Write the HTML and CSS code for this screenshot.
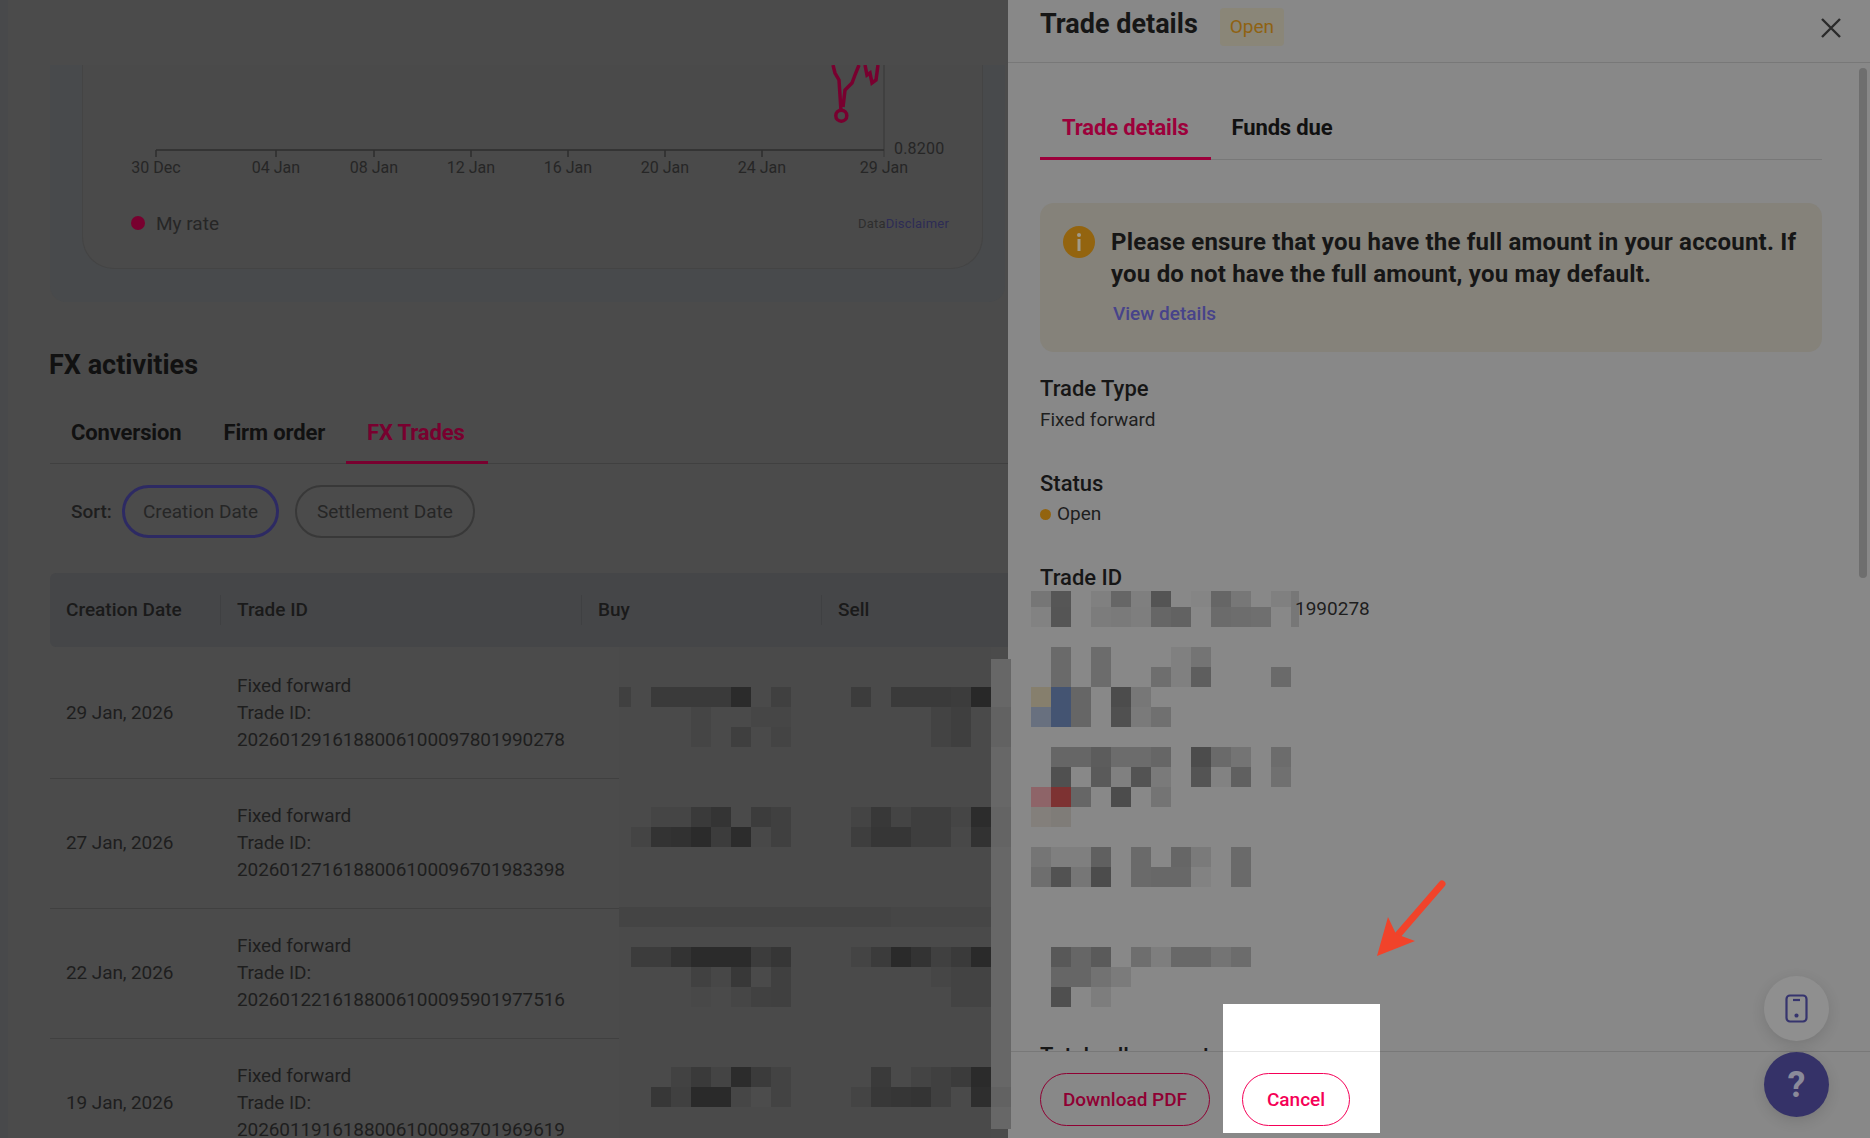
FILE: index.html
```html
<!DOCTYPE html>
<html lang="en">
<head>
    <meta charset="UTF-8">
    <meta name="viewport" content="width=device-width, initial-scale=1.0">
    <title>FX Trades - Trade details</title>
    <link rel="stylesheet" href="styles.css">
</head>
<body>
<div class="app">

    <!-- Page behind the drawer -->
    <main class="page">
        <div class="page-top"></div>

        <div class="chart-panel">
            <div class="chart-card">
                <svg class="chart" width="900" height="130" viewBox="82 65 900 130">
                    <path class="axis-y" d="M884 65V157"/>
                    <path class="axis-x" d="M156 150H884M156 150v7M276 150v7M374 150v7M471 150v7M568 150v7M665 150v7M762 150v7"/>
                    <path class="rate" d="M833 65L835 73L839 80L841 111M843 107L845 90L848 87L852 83L855 75L859 65M865 65L867 75L870 73L872 83L876 80L878 65"/>
                    <circle class="rate" cx="841.3" cy="115.7" r="5.5"/>
                    <text class="axis-value" x="894" y="154">0.8200</text>
                    <g text-anchor="middle">
                        <text x="156" y="173">30 Dec</text>
                        <text x="276" y="173">04 Jan</text>
                        <text x="374" y="173">08 Jan</text>
                        <text x="471" y="173">12 Jan</text>
                        <text x="568" y="173">16 Jan</text>
                        <text x="665" y="173">20 Jan</text>
                        <text x="762" y="173">24 Jan</text>
                        <text x="884" y="173">29 Jan</text>
                    </g>
                </svg>
                <div class="chart-foot">
                    <span class="legend"><i class="legend-dot"></i>My rate</span>
                    <span class="disclaimer">Data<b>Disclaimer</b></span>
                </div>
            </div>
        </div>

        <section class="activities">
            <h2>FX activities</h2>
            <div class="tabs">
                <a class="tab">Conversion</a>
                <a class="tab">Firm order</a>
                <a class="tab active">FX Trades</a>
            </div>

            <div class="sort">
                <span class="sort-label">Sort:</span>
                <button class="pill selected">Creation Date</button>
                <button class="pill">Settlement Date</button>
            </div>

            <div class="table-head">
                <div class="th th-date">Creation Date</div>
                <div class="th th-id">Trade ID</div>
                <div class="th th-buy">Buy</div>
                <div class="th">Sell</div>
            </div>
            <div class="row">
                <div>29 Jan, 2026</div>
                <div>Fixed forward<br>Trade ID:<br>2026012916188006100097801990278</div>
            </div>
            <div class="row">
                <div>27 Jan, 2026</div>
                <div>Fixed forward<br>Trade ID:<br>2026012716188006100096701983398</div>
            </div>
            <div class="row">
                <div>22 Jan, 2026</div>
                <div>Fixed forward<br>Trade ID:<br>2026012216188006100095901977516</div>
            </div>
            <div class="row">
                <div>19 Jan, 2026</div>
                <div>Fixed forward<br>Trade ID:<br>2026011916188006100098701969619</div>
            </div>
        </section>
    </main>

    <!-- Trade details drawer -->
    <aside class="drawer">
        <header class="drawer-head">
            <h1>Trade details</h1>
            <span class="badge">Open</span>
            <svg class="close" width="20" height="20" viewBox="0 0 20 20"><path d="M1 1L19 19M19 1L1 19"/></svg>
        </header>

        <div class="drawer-body">
            <div class="tabs tabs-drawer">
                <a class="tab active">Trade details</a>
                <a class="tab">Funds due</a>
            </div>

            <div class="notice">
                <svg class="notice-icon" width="32" height="32" viewBox="0 0 32 32">
                    <circle cx="16" cy="16" r="16" fill="#93640f"/>
                    <circle cx="16" cy="9" r="2" fill="#a09a8a"/>
                    <rect x="14.5" y="13" width="3" height="12" fill="#a09a8a"/>
                </svg>
                <div>
                    <p class="notice-text">Please ensure that you have the full amount in your account. If you do not have the full amount, you may default.</p>
                    <a class="notice-link">View details</a>
                </div>
            </div>

            <div class="field">
                <div class="field-label">Trade Type</div>
                <div class="field-value">Fixed forward</div>
            </div>
            <div class="field">
                <div class="field-label">Status</div>
                <div class="field-value status"><i class="status-dot"></i>Open</div>
            </div>
            <div class="field">
                <div class="field-label">Trade ID</div>
                <div class="field-value id-value">
                    <svg class="mosaic" width="268" height="36" viewBox="0 0 13.4 1.8">
                        <g shape-rendering="crispEdges">
                            <rect x="0" y="0" width="1" height=".8" fill="#767676"/><rect x="1" y="0" width="1" height=".8" fill="#565656"/><rect x="3" y="0" width="1" height=".8" fill="#808080"/><rect x="4" y="0" width="1" height=".8" fill="#666"/><rect x="5" y="0" width="1" height=".8" fill="#7f7f7f"/><rect x="6" y="0" width="1" height=".8" fill="#545454"/><rect x="8" y="0" width="1" height=".8" fill="#858585"/><rect x="9" y="0" width="1" height=".8" fill="#666"/><rect x="10" y="0" width="1" height=".8" fill="#777"/><rect x="12" y="0" width="1" height=".8" fill="#808080"/><rect x="13" y="0" width=".4" height=".8" fill="#777"/>
                            <rect x="0" y=".8" width="1" height="1" fill="#828282"/><rect x="1" y=".8" width="1" height="1" fill="#555"/><rect x="3" y=".8" width="1" height="1" fill="#7c7c7c"/><rect x="4" y=".8" width="1" height="1" fill="#7a7a7a"/><rect x="5" y=".8" width="1" height="1" fill="#7e7e7e"/><rect x="6" y=".8" width="1" height="1" fill="#666"/><rect x="7" y=".8" width="1" height="1" fill="#626262"/><rect x="9" y=".8" width="1" height="1" fill="#6b6b6b"/><rect x="10" y=".8" width="1" height="1" fill="#6d6d6d"/><rect x="11" y=".8" width="1" height="1" fill="#6f6f6f"/><rect x="13" y=".8" width=".4" height="1" fill="#777"/>
                        </g>
                    </svg>1990278
                </div>
            </div>

            <svg class="mosaic mosaic-tall" width="280" height="360" viewBox="0 0 14 18">
                <g shape-rendering="crispEdges">
                    <rect x="1" y="0" width="1" height="2" fill="#6a6a6a"/><rect x="3" y="0" width="1" height="2" fill="#6c6c6c"/><rect x="7" y="0" width="1" height="2" fill="#808080"/><rect x="8" y="0" width="1" height="1" fill="#747474"/><rect x="6" y="1" width="1" height="1" fill="#6e6e6e"/><rect x="8" y="1" width="1" height="1" fill="#5e5e5e"/><rect x="12" y="1" width="1" height="1" fill="#6a6a6a"/>
                    <rect x="0" y="2" width="1" height="1" fill="#867f6d"/><rect x="1" y="2" width="1" height="2" fill="#445472"/><rect x="2" y="2" width="1" height="2" fill="#666"/><rect x="4" y="2" width="1" height="1" fill="#4c4c4c"/><rect x="5" y="2" width="1" height="1" fill="#777"/>
                    <rect x="0" y="3" width="1" height="1" fill="#68707f"/><rect x="4" y="3" width="1" height="1" fill="#505050"/><rect x="5" y="3" width="1" height="1" fill="#7a7a7a"/><rect x="6" y="3" width="1" height="1" fill="#707070"/>
                    <rect x="1" y="5" width="1" height="1" fill="#666"/><rect x="2" y="5" width="1" height="1" fill="#666"/><rect x="3" y="5" width="1" height="1" fill="#5c5c5c"/><rect x="4" y="5" width="1" height="1" fill="#6c6c6c"/><rect x="5" y="5" width="1" height="1" fill="#6c6c6c"/><rect x="6" y="5" width="1" height="1" fill="#666"/><rect x="8" y="5" width="1" height="1" fill="#4c4c4c"/><rect x="9" y="5" width="1" height="1" fill="#6a6a6a"/><rect x="10" y="5" width="1" height="1" fill="#747474"/><rect x="12" y="5" width="1" height="1" fill="#6c6c6c"/>
                    <rect x="1" y="6" width="1" height="1" fill="#505050"/><rect x="3" y="6" width="1" height="1" fill="#5a5a5a"/><rect x="4" y="6" width="1" height="1" fill="#808080"/><rect x="5" y="6" width="1" height="1" fill="#535353"/><rect x="6" y="6" width="1" height="1" fill="#7a7a7a"/><rect x="8" y="6" width="1" height="1" fill="#545454"/><rect x="9" y="6" width="1" height="1" fill="#828282"/><rect x="10" y="6" width="1" height="1" fill="#606060"/><rect x="12" y="6" width="1" height="1" fill="#707070"/>
                    <rect x="0" y="7" width="1" height="1" fill="#8e6468"/><rect x="1" y="7" width="1" height="1" fill="#7d3232"/><rect x="2" y="7" width="1" height="1" fill="#666"/><rect x="4" y="7" width="1" height="1" fill="#4c4c4c"/><rect x="6" y="7" width="1" height="1" fill="#747474"/>
                    <rect x="0" y="8" width="1" height="1" fill="#837f7b"/><rect x="1" y="8" width="1" height="1" fill="#7f7c78"/>
                    <rect x="0" y="10" width="1" height="1" fill="#757575"/><rect x="1" y="10" width="2" height="1" fill="#7f7f7f"/><rect x="3" y="10" width="1" height="1" fill="#606060"/><rect x="5" y="10" width="1" height="2" fill="#6a6a6a"/><rect x="7" y="10" width="1" height="1" fill="#666"/><rect x="8" y="10" width="1" height="1" fill="#7a7a7a"/><rect x="10" y="10" width="1" height="2" fill="#6a6a6a"/>
                    <rect x="0" y="11" width="1" height="1" fill="#6e6e6e"/><rect x="1" y="11" width="1" height="1" fill="#525252"/><rect x="2" y="11" width="1" height="1" fill="#767676"/><rect x="3" y="11" width="1" height="1" fill="#4c4c4c"/><rect x="6" y="11" width="2" height="1" fill="#686868"/><rect x="8" y="11" width="1" height="1" fill="#828282"/>
                    <rect x="1" y="15" width="1" height="1" fill="#585858"/><rect x="2" y="15" width="1" height="1" fill="#666"/><rect x="3" y="15" width="1" height="1" fill="#5a5a5a"/><rect x="5" y="15" width="1" height="1" fill="#6e6e6e"/><rect x="6" y="15" width="1" height="1" fill="#7e7e7e"/><rect x="7" y="15" width="2" height="1" fill="#686868"/><rect x="9" y="15" width="1" height="1" fill="#747474"/><rect x="10" y="15" width="1" height="1" fill="#6c6c6c"/>
                    <rect x="1" y="16" width="2" height="1" fill="#666"/><rect x="3" y="16" width="1" height="1" fill="#727272"/><rect x="4" y="16" width="1" height="1" fill="#7b7b7b"/>
                    <rect x="1" y="17" width="1" height="1" fill="#4f4f4f"/><rect x="3" y="17" width="1" height="1" fill="#7d7d7d"/>
                </g>
            </svg>

            <div class="field-label total">Total sell amount</div>
            <div class="scroll-thumb"></div>
        </div>

        <footer class="drawer-foot">
            <div class="cutout"></div>
            <button class="btn">Download PDF</button>
            <button class="btn btn-cancel">Cancel</button>
        </footer>
    </aside>

    <!-- Redacted columns over the table -->
    <svg class="redact" width="400" height="491" viewBox="0 0 20 24.55">
        <g shape-rendering="crispEdges">
            <rect x=".4" y="0" width="18.6" height="24.55" fill="#4a4a4a"/>
            <rect x=".4" y="2" width=".6" height="1" fill="#404040"/><rect x="2" y="2" width="4" height="1" fill="#3a3a3a"/><rect x="6" y="2" width="1" height="1" fill="#2b2b2b"/><rect x="8" y="2" width="1" height="1" fill="#404040"/><rect x="12" y="2" width="1" height="1" fill="#3c3c3c"/><rect x="14" y="2" width="3" height="1" fill="#3a3a3a"/><rect x="17" y="2" width="1" height="1" fill="#3c3c3c"/><rect x="18" y="2" width="1" height="1" fill="#282828"/>
            <rect x="4" y="3" width="1" height="2" fill="#454545"/><rect x="7" y="3" width="2" height="1" fill="#464646"/><rect x="16" y="3" width="1" height="2" fill="#434343"/><rect x="17" y="3" width="1" height="2" fill="#3f3f3f"/><rect x="6" y="4" width="1" height="1" fill="#3f3f3f"/><rect x="8" y="4" width="1" height="1" fill="#444"/>
            <rect x="2" y="8" width="2" height="1" fill="#454545"/><rect x="4" y="8" width="1" height="1" fill="#3a3a3a"/><rect x="5" y="8" width="1" height="1" fill="#343434"/><rect x="7" y="8" width="1" height="1" fill="#3c3c3c"/><rect x="8" y="8" width="1" height="2" fill="#404040"/><rect x="12" y="8" width="1" height="1" fill="#444"/><rect x="13" y="8" width="1" height="1" fill="#383838"/><rect x="14" y="8" width="1" height="1" fill="#444"/><rect x="15" y="8" width="2" height="1" fill="#3e3e3e"/><rect x="17" y="8" width="1" height="1" fill="#454545"/><rect x="18" y="8" width="1" height="1" fill="#2c2c2c"/>
            <rect x="1" y="9" width="1" height="1" fill="#444"/><rect x="2" y="9" width="1" height="1" fill="#333"/><rect x="3" y="9" width="1" height="1" fill="#313131"/><rect x="4" y="9" width="1" height="1" fill="#2b2b2b"/><rect x="5" y="9" width="1" height="1" fill="#3c3c3c"/><rect x="6" y="9" width="1" height="1" fill="#2c2c2c"/><rect x="7" y="9" width="1" height="1" fill="#484848"/><rect x="12" y="9" width="1" height="1" fill="#3e3e3e"/><rect x="13" y="9" width="2" height="1" fill="#363636"/><rect x="15" y="9" width="2" height="1" fill="#3e3e3e"/><rect x="17" y="9" width="1" height="1" fill="#484848"/><rect x="18" y="9" width="1" height="1" fill="#323232"/>
            <rect x=".4" y="13" width="13.6" height="1" fill="#444"/><rect x="14" y="13" width="5" height="1" fill="#464646"/>
            <rect x="1" y="15" width="2" height="1" fill="#3c3c3c"/><rect x="3" y="15" width="1" height="1" fill="#333"/><rect x="4" y="15" width="3" height="1" fill="#2b2b2b"/><rect x="7" y="15" width="1" height="1" fill="#3c3c3c"/><rect x="8" y="15" width="1" height="1" fill="#363636"/><rect x="12" y="15" width="1" height="1" fill="#444"/><rect x="13" y="15" width="1" height="1" fill="#3b3b3b"/><rect x="14" y="15" width="1" height="1" fill="#2a2a2a"/><rect x="15" y="15" width="1" height="1" fill="#333"/><rect x="16" y="15" width="1" height="1" fill="#404040"/><rect x="17" y="15" width="1" height="1" fill="#3a3a3a"/><rect x="18" y="15" width="1" height="1" fill="#2a2a2a"/>
            <rect x="4" y="16" width="1" height="1" fill="#414141"/><rect x="5" y="16" width="1" height="1" fill="#474747"/><rect x="6" y="16" width="1" height="1" fill="#383838"/><rect x="8" y="16" width="1" height="2" fill="#404040"/><rect x="16" y="16" width="1" height="1" fill="#464646"/><rect x="17" y="16" width="2" height="2" fill="#434343"/>
            <rect x="4" y="17" width="1" height="1" fill="#484848"/><rect x="6" y="17" width="1" height="1" fill="#464646"/><rect x="7" y="17" width="1" height="1" fill="#414141"/>
            <rect x="3" y="21" width="1" height="1" fill="#424242"/><rect x="4" y="21" width="1" height="1" fill="#3a3a3a"/><rect x="5" y="21" width="1" height="1" fill="#444"/><rect x="6" y="21" width="1" height="1" fill="#2c2c2c"/><rect x="7" y="21" width="1" height="1" fill="#3b3b3b"/><rect x="8" y="21" width="1" height="2" fill="#434343"/><rect x="13" y="21" width="1" height="1" fill="#3a3a3a"/><rect x="15" y="21" width="1" height="1" fill="#444"/><rect x="16" y="21" width="1" height="2" fill="#404040"/><rect x="17" y="21" width="1" height="1" fill="#3b3b3b"/><rect x="18" y="21" width="1" height="1" fill="#2b2b2b"/>
            <rect x="2" y="22" width="1" height="1" fill="#373737"/><rect x="3" y="22" width="1" height="1" fill="#404040"/><rect x="4" y="22" width="2" height="1" fill="#2a2a2a"/><rect x="6" y="22" width="1" height="1" fill="#464646"/><rect x="7" y="22" width="1" height="1" fill="#4c4c4c"/><rect x="12" y="22" width="1" height="1" fill="#444"/><rect x="13" y="22" width="1" height="1" fill="#383838"/><rect x="14" y="22" width="1" height="1" fill="#363636"/><rect x="15" y="22" width="1" height="1" fill="#343434"/><rect x="18" y="22" width="1" height="1" fill="#2e2e2e"/>
            <rect x="19" y=".6" width="1" height="23.5" fill="#676767"/><rect x="19" y="3" width="1" height="2" fill="#626262"/><rect x="19" y="8" width="1" height="2" fill="#646464"/><rect x="19" y="22" width="1" height="1" fill="#626262"/>
        </g>
    </svg>

    <!-- Annotation arrow -->
    <svg class="arrow" width="80" height="85" viewBox="1370 878 80 85">
        <path d="M1442 884L1397 936" stroke="#f1432a" stroke-width="7" stroke-linecap="round"/>
        <path d="M1377 956L1388 917L1396 934L1415 941Z" fill="#f1432a"/>
    </svg>

    <!-- Floating buttons -->
    <div class="fabs">
        <div class="fab fab-phone">
            <svg width="23" height="29" viewBox="0 0 23 29" fill="none" stroke="#36346e" stroke-width="2.2">
                <rect x="1.5" y="1.5" width="20" height="26" rx="3.5"/>
                <path d="M8 6H15"/>
                <circle cx="11.5" cy="21.5" r="1" fill="#36346e"/>
            </svg>
        </div>
        <div class="fab fab-help">?</div>
    </div>
</div>
</body>
</html>
```
FILE: styles.css
```css
/* Basic reset */
* {
    margin: 0;
    padding: 0;
    box-sizing: border-box;
}

html,
body {
    height: 100%;
}

body {
    font-family: Roboto, Arial, sans-serif;
    background: #4a4a4a;
    overflow: hidden;
}

button {
    font-family: inherit;
    background: none;
    cursor: pointer;
}

.app {
    position: relative;
    display: flex;
    width: 100%;
    height: 100%;
    overflow: hidden;
}

/* Page behind the drawer */
.page {
    width: 1008px;
    flex-shrink: 0;
    background: #4b4b4b;
    box-shadow: inset 8px 0 0 #48494b;
    color: #1e1e1e;
}

.page-top {
    height: 65px;
}

.chart-panel {
    height: 237px;
    margin: 0 3px 0 50px;
    padding: 0 22px 0 32px;
    background: #484a4c;
    border-radius: 0 0 16px 16px;
}

.chart-card {
    height: 204px;
    background: #4a4a4a;
    border: 1px solid #444;
    border-top: none;
    border-radius: 0 0 32px 32px;
}

.chart {
    display: block;
    margin-left: -1px;
}

.chart text {
    font-size: 16px;
    fill: #262626;
}

.chart .axis-value {
    letter-spacing: .2px;
}

.axis-y {
    fill: none;
    stroke: #404040;
    stroke-width: 2;
}

.axis-x {
    fill: none;
    stroke: #2e2e2e;
    stroke-width: 1.5;
}

.rate {
    fill: none;
    stroke: #78002f;
    stroke-width: 3.5;
}

.chart-foot {
    display: flex;
    justify-content: space-between;
    align-items: center;
    height: 56px;
    padding: 0 33px 0 48px;
}

.legend {
    display: flex;
    align-items: center;
    gap: 11px;
    font-size: 19px;
    color: #262626;
}

.legend-dot {
    width: 14px;
    height: 14px;
    border-radius: 50%;
    background: #78002f;
}

.disclaimer {
    font-size: 13px;
    color: #2e2e2e;
    letter-spacing: .2px;
}

.disclaimer b {
    font-weight: 400;
    color: #2d2c55;
}

.activities {
    padding-left: 50px;
}

.activities h2 {
    margin: 44px 0 0 -1px;
    font-size: 27px;
    line-height: 38px;
    font-weight: 700;
    color: #111;
}

/* Tabs, used on the page and in the drawer */
.tabs {
    display: flex;
    margin-top: 18px;
    border-bottom: 1px solid #404040;
}

.tab {
    height: 62px;
    margin-bottom: -1px;
    padding: 0 21px;
    font-size: 22px;
    line-height: 62px;
    font-weight: 700;
    letter-spacing: -.15px;
    color: #111;
}

.tab.active {
    padding-right: 23px;
    color: #78002f;
    border-bottom: 3px solid #78002f;
}

.sort {
    display: flex;
    align-items: center;
    margin-top: 21px;
    padding-left: 21px;
    font-size: 19px;
}

.sort-label {
    width: 51px;
    font-weight: 500;
}

.pill {
    height: 53px;
    margin-right: 16px;
    padding: 0 20px;
    font-size: 19px;
    color: #262626;
    border: 2px solid #383838;
    border-radius: 27px;
}

.pill.selected {
    padding: 0 18px;
    border: 3px solid #2d2a63;
}

.table-head {
    display: flex;
    align-items: center;
    height: 74px;
    margin: 35px 0 2px;
    background: #454648;
    border-radius: 6px 0 0 6px;
    font-size: 19px;
    font-weight: 500;
    color: #1a1a1a;
}

.th {
    height: 30px;
    padding-left: 16px;
    line-height: 30px;
    border-right: 1px solid #3f4042;
}

.th-date {
    width: 171px;
}

.th-id {
    width: 361px;
}

.th-buy {
    width: 240px;
}

.th:last-child {
    border-right: none;
}

.row {
    display: grid;
    grid-template-columns: 171px 1fr;
    align-items: center;
    height: 130px;
    padding: 0 0 2px 16px;
    font-size: 19px;
    line-height: 27px;
    letter-spacing: -.1px;
    color: #1e1e1e;
    border-bottom: 1px solid #404040;
}

/* Drawer */
.drawer {
    position: relative;
    flex: 1;
    display: flex;
    flex-direction: column;
    background: #888;
    color: #161616;
}

.drawer-head {
    display: flex;
    align-items: flex-start;
    height: 63px;
    padding: 8px 29px 0 32px;
    border-bottom: 1px solid #787878;
}

.drawer-head h1 {
    font-size: 27px;
    line-height: 32px;
    font-weight: 700;
}

.badge {
    height: 38px;
    margin-left: 22px;
    padding: 0 10px;
    font-size: 19px;
    line-height: 38px;
    color: #8f6212;
    background: #8a8678;
    border-radius: 4px;
}

.close {
    margin: 10px 0 0 auto;
    fill: none;
    stroke: #2a2a2a;
    stroke-width: 2.4;
}

.drawer-body {
    position: relative;
    flex: 1;
    padding: 0 48px 0 32px;
    overflow: hidden;
}

.tabs-drawer {
    margin-top: 35px;
    border-bottom-color: #787878;
}

.tabs-drawer .tab {
    padding: 0 22px;
    margin-right: -1px;
    line-height: 60px;
}

.tabs-drawer .tab.active {
    color: #9c003b;
    border-bottom-color: #9c003b;
}

.notice {
    display: flex;
    gap: 16px;
    height: 149px;
    margin-top: 43px;
    padding: 23px 20px 0 23px;
    background: #85827a;
    border-radius: 14px;
}

.notice-icon {
    flex-shrink: 0;
}

.notice-text {
    font-size: 24px;
    line-height: 32px;
    font-weight: 700;
    letter-spacing: .2px;
}

.notice-link {
    display: block;
    margin: 12px 0 0 2px;
    font-size: 19px;
    line-height: 24px;
    font-weight: 500;
    color: #47438a;
}

.field {
    margin-top: 39px;
}

.notice + .field {
    margin-top: 24px;
}

.field-label {
    font-size: 22px;
    line-height: 26px;
    font-weight: 500;
}

.field-value {
    margin-top: 6px;
    font-size: 19px;
    line-height: 24px;
    color: #1e1e1e;
}

.status {
    display: flex;
    align-items: center;
    gap: 6px;
    margin-top: 5px;
}

.status-dot {
    width: 11px;
    height: 11px;
    border-radius: 50%;
    background: #93640f;
}

.id-value {
    display: flex;
    align-items: center;
    margin: 0 0 0 -9px;
}

.mosaic {
    display: block;
    flex-shrink: 0;
}

.id-value .mosaic {
    margin-right: -4px;
}

.mosaic-tall {
    margin: 20px 0 0 -9px;
}

.total {
    margin-top: 36px;
}

.scroll-thumb {
    position: absolute;
    top: 5px;
    right: 3px;
    width: 8px;
    height: 510px;
    background: #6e6e6e;
    border-radius: 4px;
}

.drawer-foot {
    position: relative;
    display: flex;
    gap: 32px;
    height: 87px;
    padding: 21px 0 0 32px;
    border-top: 1px solid #787878;
}

/* White patch over the footer, the Cancel button sits on it */
.cutout {
    position: absolute;
    top: -48px;
    left: 215px;
    width: 157px;
    height: 129px;
    background: linear-gradient(#e6e6e6, #e6e6e6) 0 47px / 100% 1px no-repeat #fff;
}

.btn {
    position: relative;
    width: 170px;
    height: 53px;
    font-size: 19px;
    font-weight: 500;
    color: #8f0033;
    border: 1.5px solid #8f0033;
    border-radius: 27px;
}

.btn-cancel {
    width: 108px;
    color: #f50057;
    border-color: #f50057;
}

/* Things that lie over the page and the drawer */
.redact {
    position: absolute;
    top: 647px;
    left: 611px;
}

.arrow {
    position: absolute;
    top: 878px;
    left: 1370px;
}

.fabs {
    position: absolute;
    right: 41px;
    bottom: 21px;
    display: flex;
    flex-direction: column;
    gap: 11px;
}

.fab {
    display: flex;
    justify-content: center;
    align-items: center;
    width: 65px;
    height: 65px;
    border-radius: 50%;
    box-shadow: 0 4px 14px rgba(0, 0, 0, 0.12);
}

.fab-phone {
    background: #8f8f8f;
}

.fab-help {
    font-size: 36px;
    font-weight: 700;
    color: #8a8a9a;
    background: #353268;
}
```
